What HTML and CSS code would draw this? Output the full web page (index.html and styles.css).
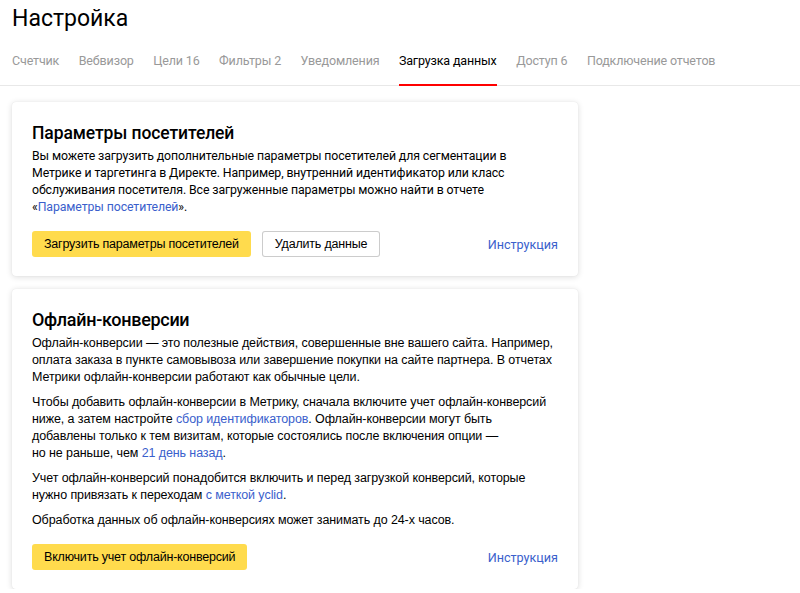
FILE: index.html
```html
<!DOCTYPE html>
<html lang="ru">
<head>
  <meta charset="UTF-8" />
  <title>Настройка</title>
  <link rel="stylesheet" href="styles.css">
</head>
<body>
  <h1 class="page-title">Настройка</h1>

  <nav class="tabs">
    <a class="tab">Счетчик</a>
    <a class="tab">Вебвизор</a>
    <a class="tab">Цели 16</a>
    <a class="tab">Фильтры 2</a>
    <a class="tab">Уведомления</a>
    <a class="tab active">Загрузка данных</a>
    <a class="tab">Доступ 6</a>
    <a class="tab">Подключение отчетов</a>
  </nav>

  <div class="cards">
    <section class="card card-params">
      <h2>Параметры посетителей</h2>
      <p>Вы можете загрузить дополнительные параметры посетителей для сегментации в<br>Метрике и таргетинга в Директе. Например, внутренний идентификатор или класс<br>обслуживания посетителя. Все загруженные параметры можно найти в отчете<br>«<a class="link">Параметры посетителей</a>».</p>
      <div class="actions">
        <div class="btns">
          <button class="btn btn-yellow">Загрузить параметры посетителей</button>
          <button class="btn btn-plain">Удалить данные</button>
        </div>
        <a class="link help">Инструкция</a>
      </div>
    </section>

    <section class="card card-offline">
      <h2>Офлайн-конверсии</h2>
      <p>Офлайн-конверсии — это полезные действия, совершенные вне вашего сайта. Например,<br>оплата заказа в пункте самовывоза или завершение покупки на сайте партнера. В отчетах<br>Метрики офлайн-конверсии работают как обычные цели.</p>
      <p>Чтобы добавить офлайн-конверсии в Метрику, сначала включите учет офлайн-конверсий<br>ниже, а затем настройте <a class="link">сбор идентификаторов</a>. Офлайн-конверсии могут быть<br>добавлены только к тем визитам, которые состоялись после включения опции —<br>но не раньше, чем <a class="link">21 день назад</a>.</p>
      <p>Учет офлайн-конверсий понадобится включить и перед загрузкой конверсий, которые<br>нужно привязать к переходам <a class="link">с меткой yclid</a>.</p>
      <p>Обработка данных об офлайн-конверсиях может занимать до 24-х часов.</p>
      <div class="actions">
        <div class="btns">
          <button class="btn btn-yellow">Включить учет офлайн-конверсий</button>
        </div>
        <a class="link help">Инструкция</a>
      </div>
    </section>
  </div>
</body>
</html>
```

FILE: styles.css
```css
/* base */
* { margin:0; padding:0; box-sizing:border-box; }
body {
  background:#fff; color:#000;
  font-family:Roboto, "Liberation Sans", sans-serif;
}

.page-title {
  font-family:Roboto, sans-serif; font-weight:400;
  font-size:23px; line-height:30px;
  padding:4px 0 0 12px;
}

/* tabs */
.tabs {
  display:flex; gap:19.5px;
  margin-top:18px; padding-left:12px;
  border-bottom:1px solid #e8e8e8;
}
.tab {
  position:relative;
  font-size:12.5px; letter-spacing:-0.15px; line-height:17px; color:#999;
  padding-bottom:16px; cursor:pointer;
}
.tab.active { color:#000; }
.tab.active::after {
  content:""; position:absolute; left:0; right:0; bottom:-1px;
  height:2px; background:#f00;
}

/* cards */
.cards {
  display:flex; flex-direction:column; gap:13px;
  padding:16px 0 0 12px; width:578px;
}
.card {
  background:#fff; border-radius:4px;
  box-shadow:0 1px 6px rgba(0,0,0,0.14), 0 0 1px rgba(0,0,0,0.1);
  padding:20px 20px 19px;
}
.card h2 {
  font-family:Roboto, sans-serif; font-weight:500;
  font-size:18px; letter-spacing:-0.3px; line-height:22px; margin-bottom:4px;
}
.card-params h2 { font-size:17.5px; letter-spacing:-0.1px; }
.card p { font-size:13px; line-height:17px; white-space:nowrap; }
.card-params p { font-family:Roboto, sans-serif; font-size:12.3px; letter-spacing:-0.1px; }
.card-offline p {
  font-family:"Liberation Sans", Arial, sans-serif;
  font-size:12.5px; letter-spacing:-0.1px; margin-bottom:8px;
}
.card-offline p:last-of-type { margin-bottom:0; }

.link { color:#3a60cc; cursor:pointer; }

.actions {
  display:flex; align-items:center; justify-content:space-between;
  margin-top:15px;
}
.btns { display:flex; gap:11px; }
.btn {
  font-family:"Liberation Sans", Arial, sans-serif;
  font-size:12.5px; letter-spacing:-0.2px;
  height:26px; padding:0 12px; border-radius:3px;
  color:#000; cursor:pointer;
}
.btn-yellow { background:#ffdb4d; border:none; }
.btn-plain { background:#fff; border:1px solid rgba(0,0,0,0.2); }
.help { font-size:12.6px; }
```
